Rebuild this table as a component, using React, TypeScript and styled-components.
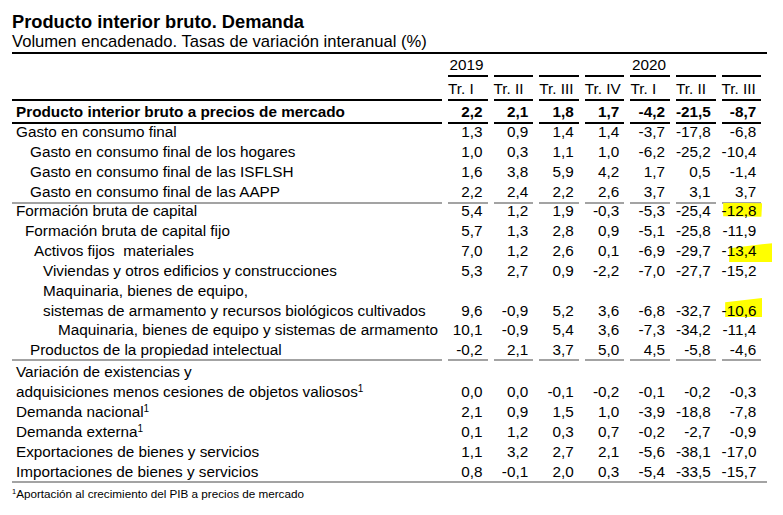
import React from 'react';
import styled, { createGlobalStyle } from 'styled-components';

type Line = 'none' | 'black' | 'gray';

const lineColor: Record<Line, string> = {
  none: 'transparent',
  black: '#000000',
  gray: '#a3a3a3',
};

const GlobalStyle = createGlobalStyle`
  html, body { margin: 0; padding: 0; background: #ffffff; }
  body { font-family: "Liberation Sans", Arial, sans-serif; color: #000000; }
`;

const Page = styled.div`
  width: 783px;
  height: 515px;
  box-sizing: border-box;
  padding: 12px 0 0 12px;
  overflow: hidden;
`;

const Header = styled.header`
  width: 755px;
  border-bottom: 2px solid #000000;
`;

const Title = styled.h1`
  margin: 0;
  font-size: 18.25px;
  line-height: 20px;
  font-weight: 700;
  white-space: nowrap;
`;

const Subtitle = styled.p`
  margin: 0;
  font-size: 16.6px;
  line-height: 20px;
  white-space: nowrap;
`;

const Table = styled.div`
  width: 755px;
  border-bottom: 2px solid #a3a3a3;
  font-size: 15.3px;
`;

const Row = styled.div<{ $h: number; $lh: number; $bold?: boolean }>`
  display: grid;
  grid-template-columns: 433px repeat(7, 45.6px);
  height: ${(p) => p.$h}px;
  line-height: ${(p) => p.$lh}px;
  font-weight: ${(p) => (p.$bold ? 700 : 400)};
`;

const Label = styled.div<{ $indent: number; $pt: number; $line: Line }>`
  box-sizing: border-box;
  margin-right: 3px;
  padding-left: ${(p) => p.$indent}px;
  padding-top: ${(p) => p.$pt}px;
  white-space: pre;
  border-bottom: 2px solid ${(p) => lineColor[p.$line]};
`;

const Num = styled.div<{ $pt: number; $line: Line }>`
  position: relative;
  box-sizing: border-box;
  margin: 0 3px;
  padding-top: ${(p) => p.$pt}px;
  padding-right: 5px;
  text-align: right;
  white-space: nowrap;
  border-bottom: 2px solid ${(p) => lineColor[p.$line]};
`;

const Head = styled.div<{ $pt: number; $line: Line; $pl: number }>`
  box-sizing: border-box;
  margin: 0 3px;
  padding-top: ${(p) => p.$pt}px;
  padding-left: ${(p) => p.$pl}px;
  text-align: left;
  white-space: nowrap;
  border-bottom: 2px solid ${(p) => lineColor[p.$line]};
`;

const NumText = styled.span`
  position: relative;
  z-index: 1;
`;

const Marker = styled.span<{ $l: number; $t: number; $w: number; $h: number; $clip: string }>`
  position: absolute;
  left: ${(p) => p.$l}px;
  top: ${(p) => p.$t}px;
  width: ${(p) => p.$w}px;
  height: ${(p) => p.$h}px;
  background: #ffff00;
  clip-path: polygon(${(p) => p.$clip});
  z-index: 0;
`;

const Sup = styled.sup<{ $size: number; $raise: number }>`
  font-size: ${(p) => p.$size}px;
  line-height: 0;
  vertical-align: ${(p) => p.$raise}px;
`;

const Footnote = styled.p`
  margin: 4px 0 0 0;
  font-size: 11.7px;
  line-height: 14px;
  white-space: nowrap;
`;

type Mark = { l: number; t: number; w: number; h: number; clip: string };

type RowData = {
  label: string;
  sup?: boolean;
  indent: number;
  values: string[];
  h: number;
  lh: number;
  pt: number;
  line: Line;
  bold?: boolean;
  mark?: Mark;
};

const B = 4;

const rows: RowData[] = [
  { label: 'Producto interior bruto a precios de mercado', indent: B, bold: true, values: ['2,2', '2,1', '1,8', '1,7', '-4,2', '-21,5', '-8,7'], h: 22, lh: 20, pt: 2, line: 'black' },
  { label: 'Gasto en consumo final', indent: B, values: ['1,3', '0,9', '1,4', '1,4', '-3,7', '-17,8', '-6,8'], h: 20, lh: 20, pt: 0, line: 'none' },
  { label: 'Gasto en consumo final de los hogares', indent: 18, values: ['1,0', '0,3', '1,1', '1,0', '-6,2', '-25,2', '-10,4'], h: 20, lh: 20, pt: 0, line: 'none' },
  { label: 'Gasto en consumo final de las ISFLSH', indent: 18, values: ['1,6', '3,8', '5,9', '4,2', '1,7', '0,5', '-1,4'], h: 20, lh: 20, pt: 0, line: 'none' },
  { label: 'Gasto en consumo final de las AAPP', indent: 18, values: ['2,2', '2,4', '2,2', '2,6', '3,7', '3,1', '3,7'], h: 20, lh: 20, pt: 0, line: 'gray' },
  { label: 'Formación bruta de capital', indent: B, values: ['5,4', '1,2', '1,9', '-0,3', '-5,3', '-25,4', '-12,8'], h: 20, lh: 18, pt: 0, line: 'none', mark: { l: 1.6, t: 0.7, w: 39, h: 14, clip: '0 0, 100% 4%, 98% 100%, 0 96%' } },
  { label: 'Formación bruta de capital fijo', indent: 13, values: ['5,7', '1,3', '2,8', '0,9', '-5,1', '-25,8', '-11,9'], h: 20, lh: 18, pt: 0, line: 'none' },
  { label: 'Activos fijos  materiales', indent: 22, values: ['7,0', '1,2', '2,6', '0,1', '-6,9', '-29,7', '-13,4'], h: 20, lh: 18, pt: 0, line: 'none', mark: { l: 7.6, t: 1.2, w: 43, h: 19, clip: '0 26%, 100% 0, 100% 100%, 0 100%' } },
  { label: 'Viviendas y otros edificios y construcciones', indent: 31, values: ['5,3', '2,7', '0,9', '-2,2', '-7,0', '-27,7', '-15,2'], h: 20, lh: 18, pt: 0, line: 'none' },
  { label: 'Maquinaria, bienes de equipo,', indent: 31, values: [], h: 19.5, lh: 18, pt: 0, line: 'none' },
  { label: 'sistemas de armamento y recursos biológicos cultivados', indent: 31, values: ['9,6', '-0,9', '5,2', '3,6', '-6,8', '-32,7', '-10,6'], h: 19.5, lh: 18, pt: 0, line: 'none', mark: { l: 3.6, t: -3.5, w: 37, h: 19, clip: '0 23%, 100% 0, 100% 100%, 0 100%' } },
  { label: 'Maquinaria, bienes de equipo y sistemas de armamento', indent: 46, values: ['10,1', '-0,9', '5,4', '3,6', '-7,3', '-34,2', '-11,4'], h: 19.5, lh: 18, pt: 0, line: 'none' },
  { label: 'Productos de la propiedad intelectual', indent: 18, values: ['-0,2', '2,1', '3,7', '5,0', '4,5', '-5,8', '-4,6'], h: 20.5, lh: 18, pt: 0, line: 'gray' },
  { label: 'Variación de existencias y', indent: B, values: [], h: 20, lh: 20, pt: 0.7, line: 'none' },
  { label: 'adquisiciones menos cesiones de objetos valiosos', sup: true, indent: B, values: ['0,0', '0,0', '-0,1', '-0,2', '-0,1', '-0,2', '-0,3'], h: 20, lh: 20, pt: 0.7, line: 'none' },
  { label: 'Demanda nacional', sup: true, indent: B, values: ['2,1', '0,9', '1,5', '1,0', '-3,9', '-18,8', '-7,8'], h: 20, lh: 20, pt: 0.7, line: 'none' },
  { label: 'Demanda externa', sup: true, indent: B, values: ['0,1', '1,2', '0,3', '0,7', '-0,2', '-2,7', '-0,9'], h: 20, lh: 20, pt: 0.7, line: 'none' },
  { label: 'Exportaciones de bienes y servicios', indent: B, values: ['1,1', '3,2', '2,7', '2,1', '-5,6', '-38,1', '-17,0'], h: 20, lh: 20, pt: 0.7, line: 'none' },
  { label: 'Importaciones de bienes y servicios', indent: B, values: ['0,8', '-0,1', '2,0', '0,3', '-5,4', '-33,5', '-15,7'], h: 20, lh: 20, pt: 0.7, line: 'none' },
];

const years = ['2019', '', '', '', '2020', '', ''];
const quarters = ['Tr. I', 'Tr. II', 'Tr. III', 'Tr. IV', 'Tr. I', 'Tr. II', 'Tr. III'];

export default function App() {
  return (
    <>
      <GlobalStyle />
      <Page>
        <Header>
          <Title>Producto interior bruto. Demanda</Title>
          <Subtitle>Volumen encadenado. Tasas de variación interanual (%)</Subtitle>
        </Header>
        <Table>
          <Row $h={22} $lh={20}>
            <Label $indent={0} $pt={1} $line="none" />
            {years.map((y, i) => (
              <Head key={i} $pt={1} $pl={1.5} $line="black">{y}</Head>
            ))}
          </Row>
          <Row $h={24} $lh={20}>
            <Label $indent={0} $pt={3} $line="black" />
            {quarters.map((q, i) => (
              <Head key={i} $pt={3} $pl={0} $line="black">{q}</Head>
            ))}
          </Row>
          {rows.map((r, ri) => (
            <Row key={ri} $h={r.h} $lh={r.lh} $bold={r.bold}>
              <Label $indent={r.indent} $pt={r.pt} $line={r.line}>
                {r.label}
                {r.sup && <Sup $size={10} $raise={5}>1</Sup>}
              </Label>
              {Array.from({ length: 7 }).map((_, ci) => (
                <Num key={ci} $pt={r.pt} $line={r.line}>
                  {r.mark && ci === 6 && (
                    <Marker $l={r.mark.l} $t={r.mark.t} $w={r.mark.w} $h={r.mark.h} $clip={r.mark.clip} />
                  )}
                  <NumText>{r.values[ci] ?? ''}</NumText>
                </Num>
              ))}
            </Row>
          ))}
        </Table>
        <Footnote>
          <Sup $size={7.5} $raise={4}>1</Sup>Aportación al crecimiento del PIB a precios de mercado
        </Footnote>
      </Page>
    </>
  );
}
